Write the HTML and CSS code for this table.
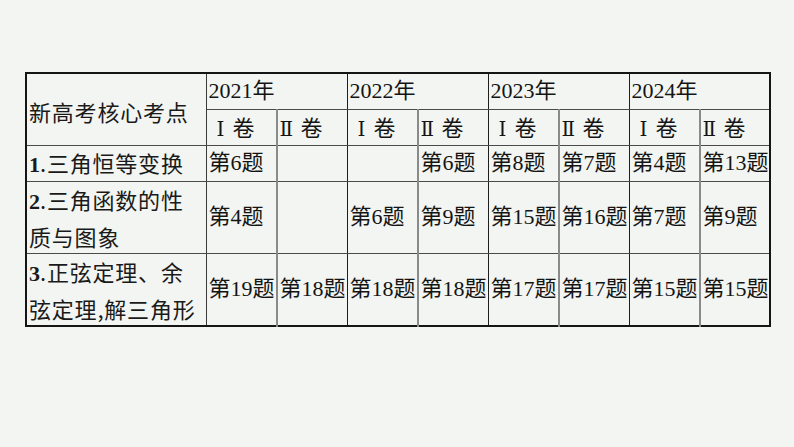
FILE: index.html
```html
<!DOCTYPE html>
<html lang="zh">
<head>
<meta charset="utf-8">
<title>新高考核心考点</title>
<link rel="stylesheet" href="styles.css">
</head>
<body>
<div class="page">
<table class="grid">
<colgroup>
<col class="c-topic">
<col class="c-d"><col class="c-d"><col class="c-d"><col class="c-d">
<col class="c-d"><col class="c-d"><col class="c-d"><col class="c-d">
</colgroup>
<tr class="r-year">
<td class="topic head" rowspan="2">新高考核心考点</td>
<td colspan="2" class="year">2021年</td>
<td colspan="2" class="year">2022年</td>
<td colspan="2" class="year">2023年</td>
<td colspan="2" class="year">2024年</td>
</tr>
<tr class="r-juan">
<td class="i"><span class="rn">Ⅰ</span>卷</td><td class="ii"><span class="rn">Ⅱ</span>卷</td>
<td class="i"><span class="rn">Ⅰ</span>卷</td><td class="ii"><span class="rn">Ⅱ</span>卷</td>
<td class="i"><span class="rn">Ⅰ</span>卷</td><td class="ii"><span class="rn">Ⅱ</span>卷</td>
<td class="i"><span class="rn">Ⅰ</span>卷</td><td class="ii"><span class="rn">Ⅱ</span>卷</td>
</tr>
<tr class="r-one">
<td class="topic"><b class="num">1</b>.三角恒等变换</td>
<td class="i">第6题</td><td class="ii"></td>
<td class="i"></td><td class="ii">第6题</td>
<td class="i">第8题</td><td class="ii">第7题</td>
<td class="i">第4题</td><td class="ii">第13题</td>
</tr>
<tr class="r-two">
<td class="topic"><b class="num">2</b>.三角函数的性<br>质与图象</td>
<td class="i">第4题</td><td class="ii"></td>
<td class="i">第6题</td><td class="ii">第9题</td>
<td class="i">第15题</td><td class="ii">第16题</td>
<td class="i">第7题</td><td class="ii">第9题</td>
</tr>
<tr class="r-two">
<td class="topic"><b class="num">3</b>.正弦定理、余<br>弦定理,解三角形</td>
<td class="i">第19题</td><td class="ii">第18题</td>
<td class="i">第18题</td><td class="ii">第18题</td>
<td class="i">第17题</td><td class="ii">第17题</td>
<td class="i">第15题</td><td class="ii">第15题</td>
</tr>
</table>
</div>
</body>
</html>
```

FILE: styles.css
```css
html, body {
  margin: 0;
  padding: 0;
  background: #f2f5f1;
}
.page {
  width: 794px;
  height: 447px;
  padding: 72px 0 0 25px;
  box-sizing: border-box;
}
.grid {
  border-collapse: collapse;
  table-layout: fixed;
  width: 744px;
  border: 2px solid #151515;
  color: #141414;
  font-family: "Liberation Serif", "Noto Sans CJK SC", serif;
  font-size: 22px;
}
.c-topic { width: 180px; }
.c-d { width: 70.5px; }
.grid td {
  padding: 0 0 0 2px;
  border: 1px solid #3a3a3a;
  border-top: 1.5px solid #4a4a4a;
  border-bottom: 1.5px solid #4a4a4a;
  vertical-align: middle;
  white-space: nowrap;
  overflow: hidden;
  line-height: 30px;
}
.grid td.i {
  border-right: 2px solid #8a8a8a;
}
.grid td.ii {
  border-left: 2px solid #8a8a8a;
  border-right: 1px solid #1e1e1e;
}
.grid td.year {
  border-right: 1px solid #1e1e1e;
}
.r-year, .r-juan, .r-one { height: 36px; }
.r-two { height: 72px; }
.r-two td { line-height: 34px; }
.topic {
  font-family: "Noto Sans CJK SC", sans-serif;
  letter-spacing: 0.8px;
  color: #1a1a1a;
}
.topic.head {
  padding-top: 4px;
}
.num {
  font-family: "Liberation Serif", serif;
  font-weight: 700;
  letter-spacing: 0;
}
.r-juan td {
  font-family: "Noto Sans CJK SC", sans-serif;
}
.rn {
  font-family: "DejaVu Serif", "Liberation Serif", serif;
  font-size: 20px;
  display: inline-block;
  width: 24px;
  text-align: center;
}
.r-juan td.ii .rn {
  width: 21px;
  text-align: left;
}
```
